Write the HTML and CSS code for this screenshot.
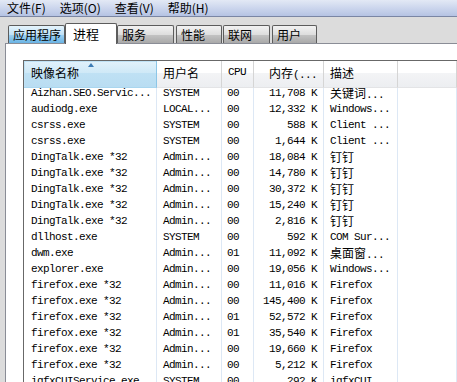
FILE: index.html
```html
<!DOCTYPE html>
<html lang="zh-CN">
<head>
  <meta charset="UTF-8">
  <title>Windows 任务管理器</title>
  <link rel="stylesheet" href="styles.css">
</head>
<body>
  <div class="menubar">
    <span class="menu-item">文件(F)</span>
    <span class="menu-item">选项(O)</span>
    <span class="menu-item">查看(V)</span>
    <span class="menu-item">帮助(H)</span>
  </div>

  <div class="tabs">
    <div class="tab tab-apps hover">应用程序</div>
    <div class="tab tab-proc active">进程</div>
    <div class="tab tab-svc">服务</div>
    <div class="tab tab-perf">性能</div>
    <div class="tab tab-net">联网</div>
    <div class="tab tab-user">用户</div>
  </div>

  <div class="panel">
    <div class="list">
      <div class="list-head">
        <div class="hcell sorted">映像名称<span class="sort-arrow"></span></div>
        <div class="hcell">用户名</div>
        <div class="hcell mono">CPU</div>
        <div class="hcell right">内存<span class="mono">(...</span></div>
        <div class="hcell">描述</div>
        <div class="hcell"></div>
      </div>

      <div class="list-body">
        <div class="row"><span>Aizhan.SEO.Servic...</span><span>SYSTEM</span><span>00</span><span class="right">11,708 K</span><span><i class="zh">关键词</i>...</span><span></span></div>
        <div class="row"><span>audiodg.exe</span><span>LOCAL...</span><span>00</span><span class="right">12,332 K</span><span>Windows...</span><span></span></div>
        <div class="row"><span>csrss.exe</span><span>SYSTEM</span><span>00</span><span class="right">588 K</span><span>Client ...</span><span></span></div>
        <div class="row"><span>csrss.exe</span><span>SYSTEM</span><span>00</span><span class="right">1,644 K</span><span>Client ...</span><span></span></div>
        <div class="row"><span>DingTalk.exe *32</span><span>Admin...</span><span>00</span><span class="right">18,084 K</span><span><i class="zh">钉钉</i></span><span></span></div>
        <div class="row"><span>DingTalk.exe *32</span><span>Admin...</span><span>00</span><span class="right">14,780 K</span><span><i class="zh">钉钉</i></span><span></span></div>
        <div class="row"><span>DingTalk.exe *32</span><span>Admin...</span><span>00</span><span class="right">30,372 K</span><span><i class="zh">钉钉</i></span><span></span></div>
        <div class="row"><span>DingTalk.exe *32</span><span>Admin...</span><span>00</span><span class="right">15,240 K</span><span><i class="zh">钉钉</i></span><span></span></div>
        <div class="row"><span>DingTalk.exe *32</span><span>Admin...</span><span>00</span><span class="right">2,816 K</span><span><i class="zh">钉钉</i></span><span></span></div>
        <div class="row"><span>dllhost.exe</span><span>SYSTEM</span><span>00</span><span class="right">592 K</span><span>COM Sur...</span><span></span></div>
        <div class="row"><span>dwm.exe</span><span>Admin...</span><span>01</span><span class="right">11,092 K</span><span><i class="zh">桌面窗</i>...</span><span></span></div>
        <div class="row"><span>explorer.exe</span><span>Admin...</span><span>00</span><span class="right">19,056 K</span><span>Windows...</span><span></span></div>
        <div class="row"><span>firefox.exe *32</span><span>Admin...</span><span>00</span><span class="right">11,016 K</span><span>Firefox</span><span></span></div>
        <div class="row"><span>firefox.exe *32</span><span>Admin...</span><span>00</span><span class="right">145,400 K</span><span>Firefox</span><span></span></div>
        <div class="row"><span>firefox.exe *32</span><span>Admin...</span><span>01</span><span class="right">52,572 K</span><span>Firefox</span><span></span></div>
        <div class="row"><span>firefox.exe *32</span><span>Admin...</span><span>01</span><span class="right">35,540 K</span><span>Firefox</span><span></span></div>
        <div class="row"><span>firefox.exe *32</span><span>Admin...</span><span>00</span><span class="right">19,660 K</span><span>Firefox</span><span></span></div>
        <div class="row"><span>firefox.exe *32</span><span>Admin...</span><span>00</span><span class="right">5,212 K</span><span>Firefox</span><span></span></div>
        <div class="row"><span>igfxCUIService.exe</span><span>SYSTEM</span><span>00</span><span class="right">292 K</span><span>igfxCUI...</span><span></span></div>
      </div>
    </div>
  </div>
</body>
</html>
```

FILE: styles.css
```css
body {
  margin: 0;
  height: 382px;
  overflow: hidden;
  display: flex;
  flex-direction: column;
  background-color: #dcdcdc;
  font-family: "Noto Sans CJK SC", sans-serif;
  font-size: 12px;
  color: #000;
}
.menubar {
  height: 16px;
  flex-shrink: 0;
  display: flex;
  border-bottom: 1px solid #7a86a4;
  background: linear-gradient(#e3e9f5, #ccd6ed 50%, #b5c3e3);
}
.menu-item {
  padding: 0 7px;
  line-height: 16px;
}
.tabs {
  height: 20px;
  flex-shrink: 0;
  margin-top: 6px;
  padding-left: 8px;
  display: flex;
  align-items: flex-end;
}
.tab {
  box-sizing: border-box;
  height: 18px;
  padding-left: 4px;
  line-height: 17px;
  font-size: 12px;
  border: 1px solid #5c5c5c;
  border-bottom: none;
  border-radius: 2px 2px 0 0;
  background: linear-gradient(#f2f2f2, #dedede 50%, #c4c4c4 51%, #a9a9a9);
}
.tab.hover {
  background: linear-gradient(#e6f4fc, #bfe1f6 50%, #9fd1f1 51%, #6ab4e4);
}
.tab.active {
  position: relative;
  z-index: 1;
  height: 21px;
  margin-bottom: -1px;
  padding-left: 7px;
  line-height: 20px;
  font-size: 13px;
  background: #fff;
}
.tab-apps { width: 57px; }
.tab-proc { width: 52px; }
.tab-svc { width: 57px; }
.tab-perf { width: 46px; margin-left: 2px; }
.tab-net { width: 47px; margin-left: 1px; }
.tab-user { width: 45px; margin-left: 2px; }

.panel {
  flex: 1;
  min-height: 0;
  display: flex;
  margin-left: 5px;
  padding: 16px 0 0 17px;
  border-top: 1px solid #8a8d96;
  border-left: 1px solid #8a8d96;
  background-color: #fff;
}
.list {
  flex: 1;
  overflow: hidden;
  border-top: 1px solid #686868;
  border-left: 1px solid #686868;
}
.list-head,
.row {
  display: grid;
  grid-template-columns: 133px 65px 32px 70px 74px 1fr;
}
.list-head {
  height: 24px;
}
.hcell {
  position: relative;
  box-sizing: border-box;
  padding-left: 6px;
  line-height: 23px;
  border-right: 1px solid #d5d5d5;
  border-bottom: 1px solid #e3e4e6;
  background: linear-gradient(#ffffff, #ffffff 45%, #f3f4f6 46%, #eceef1);
}
.hcell.sorted {
  padding-left: 7px;
  border-right-color: #8cc6e7;
  border-bottom-color: #a9d6ef;
  box-shadow: inset 1px 1px 0 #bfe2f5;
  background: linear-gradient(#e2f2fb, #cfe9f7 45%, #bfe1f4 46%, #b9ddf2);
}
.hcell.right {
  text-align: right;
  padding-right: 6px;
}
.sort-arrow {
  position: absolute;
  left: 64px;
  top: 2px;
  width: 0;
  height: 0;
  border-left: 3px solid transparent;
  border-right: 3px solid transparent;
  border-bottom: 4px solid #3d7cb5;
}
.mono {
  font-family: "Liberation Mono", monospace;
  font-size: 11px;
  letter-spacing: -0.6px;
}
.row {
  height: 16px;
  line-height: 16px;
  font-family: "Liberation Mono", monospace;
  font-size: 11px;
  letter-spacing: -0.6px;
  white-space: nowrap;
}
.row span {
  overflow: hidden;
  padding-left: 6px;
  border-right: 1px solid #dde8f5;
}
.row span:first-child {
  padding-left: 7px;
}
.row span:nth-child(3) {
  padding-left: 5px;
}
.row span.right {
  text-align: right;
  padding-left: 0;
  padding-right: 6px;
}
.zh {
  font-style: normal;
  font-family: "Noto Sans CJK SC", sans-serif;
  font-size: 12px;
  letter-spacing: 0;
}
```
